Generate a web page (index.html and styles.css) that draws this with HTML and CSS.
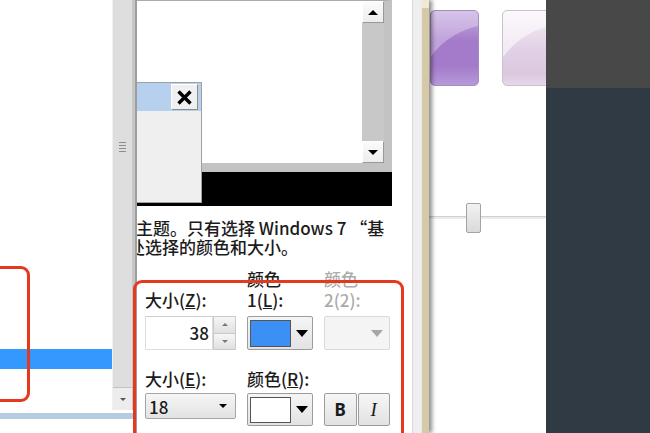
FILE: index.html
```html
<!DOCTYPE html>
<html lang="zh-CN">
<head>
    <meta charset="UTF-8">
    <meta name="viewport" content="width=device-width, initial-scale=1.0">
    <title>窗口颜色和外观</title>
    <link rel="stylesheet" href="styles.css">
</head>
<body>
    <div id="screen">
        <!-- 左边列表窗口 -->
        <div id="left_win">
            <div class="left_body">
                <div class="list">
                    <div class="sel"></div>
                </div>
                <div class="vscroll">
                    <div class="thumb"><span class="grip"></span></div>
                    <div class="down_btn"><span class="tri_small"></span></div>
                </div>
            </div>
            <div class="left_line"></div>
        </div>

        <!-- 窗口颜色和外观 对话框 -->
        <div id="dialog">
            <div class="preview">
                <div class="pv_win">
                    <div class="pv_text"></div>
                    <div class="pv_scroll">
                        <div class="pv_btn"><span class="tri up"></span></div>
                        <div class="pv_track"></div>
                        <div class="pv_btn"><span class="tri down"></span></div>
                    </div>
                </div>
                <div class="pv_bar"></div>
                <div class="msgbox">
                    <div class="msg_title">
                        <span class="msg_close">
                            <svg width="17" height="15" viewBox="0 0 17 15"><path d="M2.5 1.5 L14.5 13.5 M14.5 1.5 L2.5 13.5" stroke="#000" stroke-width="3.4" fill="none"/></svg>
                        </span>
                    </div>
                </div>
            </div>

            <div class="note">
                <div class="l1">主题。只有选择 Windows 7 “基</div>
                <div class="l2">处选择的颜色和大小。</div>
            </div>

            <div class="group">
                <div class="lab"><span>大小(<u>Z</u>):</span></div>
                <div class="lab"><span>颜色</span><span>1(<u>L</u>):</span></div>
                <div class="lab off"><span>颜色</span><span>2(2):</span></div>

                <div class="ctl spin">
                    <div class="num">38</div>
                    <div class="arrows">
                        <span><i class="ar_up"></i></span>
                        <span><i class="ar_down"></i></span>
                    </div>
                </div>
                <div class="ctl color_btn">
                    <span class="swatch blue"></span>
                    <span class="drop"><i class="tri down"></i></span>
                </div>
                <div class="ctl color_btn disabled">
                    <span class="drop"><i class="tri down"></i></span>
                </div>

                <div class="lab row2"><span>大小(<u>E</u>):</span></div>
                <div class="lab row2"><span>颜色(<u>R</u>):</span></div>
                <div class="lab row2"></div>

                <div class="ctl2 combo">
                    <span>18</span>
                    <i class="tri_small black"></i>
                </div>
                <div class="ctl2 color_btn tall">
                    <span class="swatch white"></span>
                    <span class="drop"><i class="tri down"></i></span>
                </div>
                <div class="ctl2 styles">
                    <span class="sbtn bold">B</span>
                    <span class="sbtn ital">I</span>
                </div>
            </div>
        </div>
        <div class="dlg_edge"></div>
        <div class="frame"></div>

        <!-- 右边窗口 -->
        <div id="right_win">
            <div class="tiles">
                <div class="tile purple"></div>
                <div class="tile light"></div>
            </div>
            <div class="slider"><span class="knob"></span></div>
        </div>
        <div id="dark"></div>

        <!-- 红色标记框 -->
        <div class="mark mark_left"></div>
        <div class="mark mark_right"></div>
    </div>
</body>
</html>
```

FILE: styles.css
```css
*{
    box-sizing: border-box;
    margin: 0;
    padding: 0;
}
body{
    width: 650px;
    height: 433px;
    overflow: hidden;
    background: #fff;
    font-family: "Noto Sans CJK SC", "Noto Sans", sans-serif;
    font-size: 17px;
    font-weight: 500;
    color: #1b1b1b;
}
#screen{
    display: flex;
    width: 650px;
    height: 433px;
    position: relative;
    overflow: hidden;
}

/* 左边窗口 */
#left_win{
    width: 135px;
    display: flex;
    flex-direction: column;
}
#left_win .left_body{
    display: flex;
    height: 410px;
}
#left_win .list{
    flex: 1;
    padding-top: 349px;
}
#left_win .sel{
    height: 20px;
    background: #3399ff;
}
.vscroll{
    width: 23px;
    display: flex;
    flex-direction: column;
    background: #dedede;
    border-left: 1px solid #f0f0f0;
    border-right: 3px solid #c6c6c6;
}
.vscroll .thumb{
    height: 388px;
    padding-top: 142px;
    display: flex;
    justify-content: center;
    border-bottom: 1px solid #c2c2c2;
}
.vscroll .grip{
    width: 7px;
    height: 11px;
    background: repeating-linear-gradient(#8c8c8c 0 1px, transparent 1px 3px);
}
.vscroll .down_btn{
    flex: 1;
    background: #ececec;
    display: flex;
    align-items: center;
    justify-content: center;
}
.tri_small{
    display: block;
    border-left: 3px solid transparent;
    border-right: 3px solid transparent;
    border-top: 3px solid #555;
}
.left_line{
    margin-top: 3px;
    margin-right: 2px;
    height: 6px;
    background: #b4cbe0;
}

/* 对话框 */
#dialog{
    width: 277px;
    border-left: 2px solid #9d9d9d;
    background: #fff;
    overflow: hidden;
}
.preview{
    position: relative;
    width: 255px;
}
.pv_win{
    display: flex;
    height: 172px;
    border-top: 1px solid #ababab;
    border-right: 8px solid #c3c3c3;
    border-bottom: 9px solid #c3c3c3;
}
.pv_text{
    flex: 1;
    background: #fff;
}
.pv_scroll{
    width: 22px;
    display: flex;
    flex-direction: column;
}
.pv_btn{
    height: 22px;
    background: linear-gradient(#fbfbfb, #ededed);
    border: 1px solid;
    border-color: #fff #999 #999 #fff;
    display: flex;
    align-items: center;
    justify-content: center;
}
.pv_track{
    flex: 1;
    background: #c8c8c8;
}
.tri{
    display: block;
    border-left: 5px solid transparent;
    border-right: 5px solid transparent;
}
.tri.up{
    border-bottom: 5px solid #000;
}
.tri.down{
    border-top: 5px solid #000;
}
.pv_bar{
    height: 34px;
    background: #000;
}
.msgbox{
    position: absolute;
    left: 0;
    top: 82px;
    width: 65px;
    height: 121px;
    background: #efefef;
    border: 1px solid #a0a0a0;
    border-left: 0;
}
.msg_title{
    height: 28px;
    background: #b6d0ee;
    display: flex;
    justify-content: flex-end;
    padding: 1px 3px 1px 0;
}
.msg_close{
    width: 27px;
    height: 26px;
    background: #f0f0f0;
    border: 1px solid;
    border-color: #fff #8c8c8c #8c8c8c #fff;
    display: flex;
    align-items: center;
    justify-content: center;
}

/* 说明文字 */
.note{
    margin-top: 12px;
    line-height: 19px;
    white-space: nowrap;
}
.note .l1{
    margin-left: -1px;
}
.note .l2{
    margin-left: -9px;
}

/* 项目设置 */
.group{
    margin-top: 12px;
    padding-left: 8px;
    display: grid;
    grid-template-columns: 91px 66px 66px;
    column-gap: 11px;
}
.lab{
    height: 42px;
    line-height: 21px;
    display: flex;
    flex-direction: column;
    justify-content: flex-end;
    white-space: nowrap;
}
.lab.off{
    color: #ababab;
}
.lab.row2{
    height: 21px;
    margin-top: 18px;
}
.ctl{
    height: 34px;
    margin-top: 6px;
}
.ctl2{
    margin-top: 4px;
}
.spin{
    display: flex;
}
.spin .num{
    width: 68px;
    border: 1px solid #dedede;
    border-top-color: #cfcfcf;
    text-align: right;
    padding-right: 3px;
    line-height: 31px;
}
.spin .arrows{
    width: 23px;
    display: flex;
    flex-direction: column;
}
.spin .arrows span{
    flex: 1;
    background: linear-gradient(#f6f6f6, #e0e0e0);
    border: 1px solid #c9c9c9;
    display: flex;
    align-items: center;
    justify-content: center;
}
.spin .arrows span + span{
    border-top: 0;
}
.ar_up, .ar_down{
    display: block;
    border-left: 3px solid transparent;
    border-right: 3px solid transparent;
}
.ar_up{
    border-bottom: 3px solid #6a7a90;
}
.ar_down{
    border-top: 3px solid #6a7a90;
}
.color_btn{
    display: flex;
    align-items: center;
    border: 1px solid #9c9c9c;
    border-radius: 2px;
    background: linear-gradient(#f5f5f5, #e3e3e3);
    padding-left: 2px;
}
.color_btn.tall{
    height: 33px;
}
.color_btn .swatch{
    width: 41px;
    height: 27px;
    border: 1px solid #555;
}
.swatch.blue{
    background: #3b8ff5;
}
.swatch.white{
    height: 26px;
    background: #fff;
}
.color_btn .drop{
    flex: 1;
    display: flex;
    justify-content: center;
}
.color_btn .tri.down{
    border-left-width: 6px;
    border-right-width: 6px;
    border-top-width: 7px;
}
.color_btn.disabled{
    border-color: #dadada;
    background: #f4f4f4;
    padding-right: 6px;
}
.color_btn.disabled .drop{
    justify-content: flex-end;
}
.color_btn.disabled .tri.down{
    border-top-color: #a6a6a6;
}
.combo{
    height: 26px;
    display: flex;
    align-items: center;
    justify-content: space-between;
    padding: 0 8px 0 3px;
    border: 1px solid #a6a6a6;
    border-radius: 2px;
    background: linear-gradient(#f6f6f6, #e2e2e2);
}
.tri_small.black{
    border-left-width: 4px;
    border-right-width: 4px;
    border-top: 4px solid #000;
}
.styles{
    display: flex;
    gap: 1px;
}
.sbtn{
    width: 33px;
    height: 33px;
    display: flex;
    align-items: center;
    justify-content: center;
    border: 1px solid #9c9c9c;
    border-radius: 2px;
    background: linear-gradient(#f6f6f6, #e2e2e2);
}
.sbtn.bold{
    font-weight: bold;
    font-family: "Noto Sans", sans-serif;
}
.sbtn.ital{
    font-style: italic;
    font-family: "Liberation Serif", serif;
    font-size: 19px;
}

/* 对话框右边框 */
.dlg_edge{
    width: 10px;
    background: #efefef;
    border-left: 1px solid #d8d8d8;
}
.frame{
    width: 7px;
    background: linear-gradient(#efe9d6 0 8px, #d5c9a8 8px);
    box-shadow: 3px 0 4px rgba(0, 0, 0, 0.45);
    position: relative;
    z-index: 2;
}

/* 右边窗口 */
#right_win{
    width: 117px;
    background: #fff;
    padding-top: 10px;
    display: flex;
    flex-direction: column;
}
.tiles{
    display: flex;
    gap: 23px;
    padding-left: 1px;
}
.tile{
    flex: none;
    width: 49px;
    height: 76px;
    border-radius: 5px;
    border: 1px solid #a58cbf;
}
.tile.purple{
    background:
        radial-gradient(circle at 135% 125%, transparent 0 70%, rgba(255, 255, 255, 0.3) 71%),
        linear-gradient(#c6abe0, #a47bcb 40%, #a47bcb 75%, #b79ad8);
}
.tile.light{
    width: 50px;
    border-color: #cbbfd0;
    background:
        radial-gradient(circle at 135% 125%, transparent 0 70%, rgba(255, 255, 255, 0.55) 71%),
        linear-gradient(#f6f0f7, #e2d2e6 50%, #dbc8e0 85%, #e6d8ea);
}
.slider{
    margin-top: 117px;
    height: 30px;
    display: flex;
    align-items: center;
    background: linear-gradient(transparent 13px, #d0d0d0 13px 14px, #ececec 14px 16px, transparent 16px);
}
.slider .knob{
    margin-left: 37px;
    width: 15px;
    height: 30px;
    border: 1px solid #a4a4a4;
    border-radius: 2px;
    background: linear-gradient(#f2f2f2, #dadada);
}

#dark{
    width: 104px;
    background: linear-gradient(#484848 0 88px, #2f3a45 88px);
}

/* 红色标记 */
.mark{
    position: absolute;
    border: 3px solid #e5391f;
    border-radius: 9px;
}
.mark_left{
    left: -20px;
    top: 266px;
    width: 50px;
    height: 136px;
}
.mark_right{
    left: 133px;
    top: 280px;
    width: 271px;
    height: 200px;
}
```
